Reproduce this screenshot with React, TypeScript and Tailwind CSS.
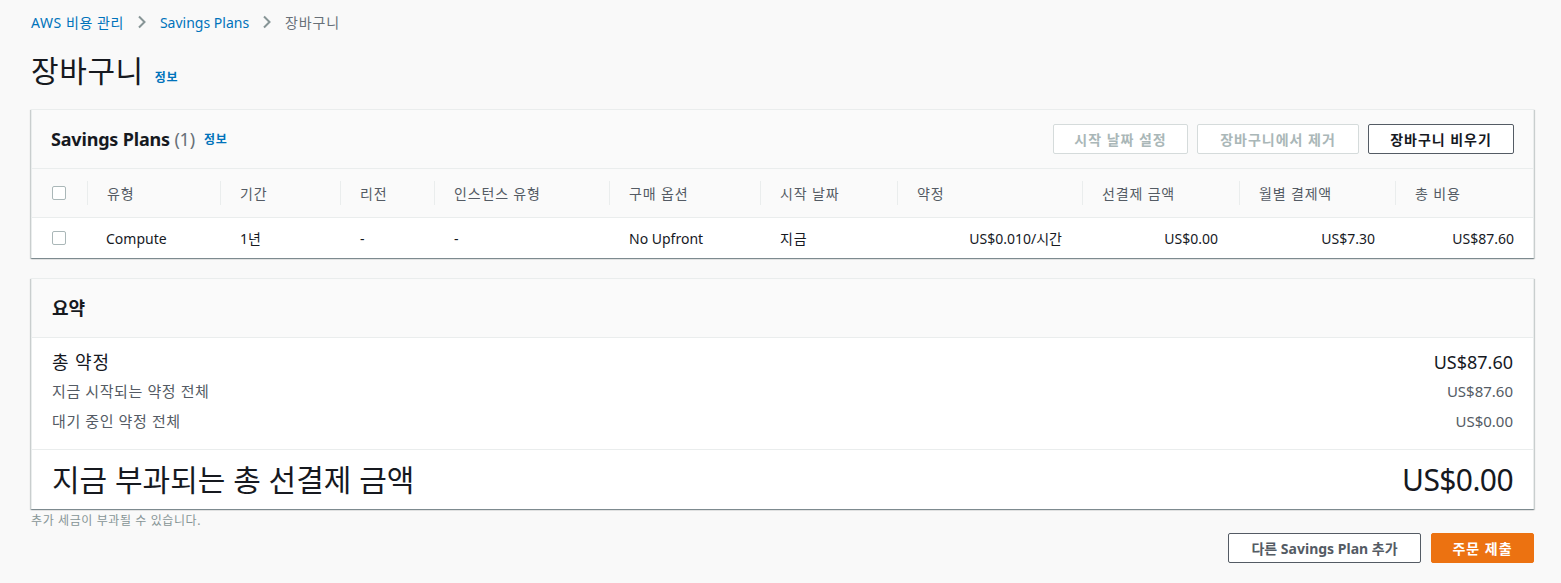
import React from "react";

const FONT = { fontFamily: '"Noto Sans", "Noto Sans CJK KR", sans-serif' };

function Chevron() {
  return (
    <svg width="10" height="14" viewBox="0 0 10 14" className="mx-[13px]">
      <path d="M2 1.5 L7.5 7 L2 12.5" fill="none" stroke="#879596" strokeWidth="2" />
    </svg>
  );
}

function Checkbox() {
  return <span className="inline-block w-[14px] h-[14px] border border-[#aab7b8] rounded-[2px] bg-white" />;
}

const cols = "grid grid-cols-[55px_133px_120px_94px_175px_151px_137px_185px_157px_156px_1fr]";

const headers = ["유형", "기간", "리전", "인스턴스 유형", "구매 옵션", "시작 날짜", "약정", "선결제 금액", "월별 결제액", "총 비용"];

const panel =
  "bg-white border-t border-x border-[#eaeded] shadow-[0_1px_1px_0_rgba(0,28,36,0.3),1px_1px_1px_0_rgba(0,28,36,0.15),-1px_1px_1px_0_rgba(0,28,36,0.15)]";

export default function App() {
  return (
    <div style={FONT} className="min-h-[583px] bg-[#f9f9f9] pl-[31px] pr-[27px] text-[#16191f]">
      {/* breadcrumb */}
      <nav className="flex items-center h-[44px] text-[14px]">
        <a className="text-[#0073bb] tracking-[0.04em]">AWS 비용 관리</a>
        <Chevron />
        <a className="text-[#0073bb]">Savings Plans</a>
        <Chevron />
        <span className="text-[#687078] tracking-[0.06em]">장바구니</span>
      </nav>

      <div className="flex items-baseline h-[58px] pt-[7px]">
        <h1 className="text-[30px] leading-[40px] font-normal tracking-[0.02em]">장바구니</h1>
        <a className="ml-[11px] text-[12px] font-bold text-[#0073bb] tracking-[0.06em]">정보</a>
      </div>

      {/* Savings Plans table */}
      <section className={`mt-[7px] ${panel}`}>
        <div className="flex items-center justify-between h-[59px] bg-[#fafafa] border-b border-[#eaeded] pl-[19px] pr-[19px]">
          <div className="flex items-center">
            <h2 className="text-[18px] font-bold tracking-[-0.01em]">Savings Plans <span className="font-normal text-[#687078]">(1)</span></h2>
            <a className="ml-[9px] mt-[2px] text-[12px] font-bold text-[#0073bb] tracking-[0.06em]">정보</a>
          </div>
          <div className="flex items-center gap-[9px]">
            <button className="h-[30px] w-[135px] border border-[#d5dbdb] bg-white text-[14px] font-bold text-[#aab7b8] rounded-[2px] tracking-[0.07em]">시작 날짜 설정</button>
            <button className="h-[30px] w-[162px] border border-[#d5dbdb] bg-white text-[14px] font-bold text-[#aab7b8] rounded-[2px] tracking-[0.07em]">장바구니에서 제거</button>
            <button className="h-[30px] w-[146px] border border-[#545b64] bg-white text-[14px] font-bold text-[#16191f] rounded-[2px] tracking-[0.07em]">장바구니 비우기</button>
          </div>
        </div>

        <div className={`${cols} h-[49px] items-center bg-[#fafafa] border-b border-[#eaeded] text-[14px] text-[#545b64]`}>
          <div className="flex items-center pl-[20px]"><Checkbox /></div>
          {headers.map((h) => (
            <div key={h} className="border-l border-[#eaeded] h-[24px] flex items-center pl-[19px] tracking-[0.06em]">{h}</div>
          ))}
        </div>

        <div className={`${cols} h-[40px] items-center text-[14px]`}>
          <div className="flex items-center pl-[20px]"><Checkbox /></div>
          <div className="pl-[19px]">Compute</div>
          <div className="pl-[20px]">1년</div>
          <div className="pl-[20px]">-</div>
          <div className="pl-[20px]">-</div>
          <div className="pl-[20px]">No Upfront</div>
          <div className="pl-[20px] tracking-[0.06em]">지금</div>
          <div className="text-right pr-[20px]">US$0.010/시간</div>
          <div className="text-right pr-[21px]">US$0.00</div>
          <div className="text-right pr-[20px]">US$7.30</div>
          <div className="text-right pr-[19px]">US$87.60</div>
        </div>
      </section>

      {/* Summary */}
      <section className={`mt-[20px] ${panel}`}>
        <div className="flex items-center h-[59px] bg-[#fafafa] border-b border-[#eaeded] pl-[20px]">
          <h2 className="text-[18px] font-bold">요약</h2>
        </div>
        <div className="px-[20px] pt-[10px] pb-[13px] border-b border-[#eaeded]">
          <div className="flex justify-between items-center h-[28px] text-[18px]">
            <span className="tracking-[0.05em]">총 약정</span>
            <span>US$87.60</span>
          </div>
          <div className="flex justify-between items-center h-[30px] text-[15px] text-[#545b64]">
            <span className="tracking-[0.04em]">지금 시작되는 약정 전체</span>
            <span>US$87.60</span>
          </div>
          <div className="flex justify-between items-center h-[30px] text-[15px] text-[#545b64]">
            <span className="tracking-[0.04em]">대기 중인 약정 전체</span>
            <span>US$0.00</span>
          </div>
        </div>
        <div className="flex justify-between items-center h-[59px] px-[20px] text-[30px]">
          <span>지금 부과되는 총 선결제 금액</span>
          <span className="tracking-[-0.02em]">US$0.00</span>
        </div>
      </section>

      <p className="mt-[3px] text-[12px] text-[#879596] tracking-[0.05em]">추가 세금이 부과될 수 있습니다.</p>

      <div className="flex justify-end gap-[10px] mt-[3px] pb-[22px]">
        <button className="h-[30px] w-[193px] border border-[#545b64] bg-white text-[14px] font-bold text-[#545b64] rounded-[2px]">다른 Savings Plan 추가</button>
        <button className="h-[30px] w-[103px] border border-[#ec7211] bg-[#ec7211] text-[14px] font-bold text-white rounded-[2px] tracking-[0.07em]">주문 제출</button>
      </div>
    </div>
  );
}
